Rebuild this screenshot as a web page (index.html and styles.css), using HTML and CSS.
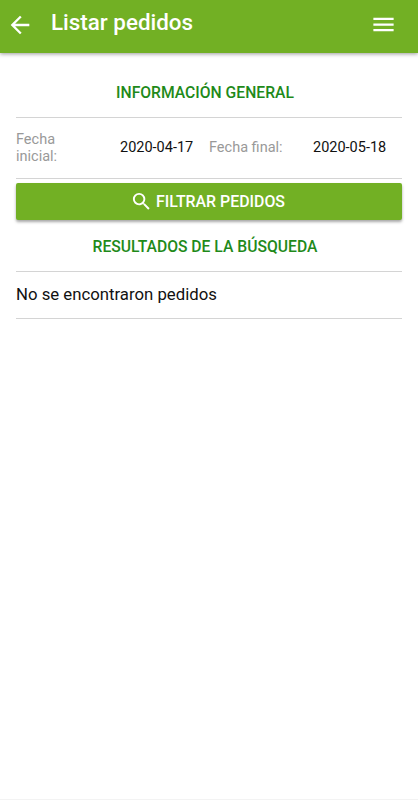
FILE: index.html
```html
<!DOCTYPE html>
<html lang="es">
<head>
  <meta charset="UTF-8" />
  <title>Listar pedidos</title>
  <meta name="viewport" content="width=device-width, initial-scale=1" />
  <link rel="stylesheet" href="styles.css">
</head>
<body>
  <header class="toolbar">
    <svg class="back" viewBox="0 0 24 24"><path d="M20 11H7.83l5.59-5.59L12 4l-8 8 8 8 1.41-1.41L7.83 13H20v-2z"/></svg>
    <h1>Listar pedidos</h1>
    <svg class="menu" viewBox="0 0 24 24"><path d="M3 18h18v-2H3v2zm0-5h18v-2H3v2zm0-7v2h18V6H3z"/></svg>
  </header>

  <main>
    <h2>Información general</h2>
    <div class="dates">
      <span class="label">Fecha inicial:</span>
      <span class="date">2020-04-17</span>
      <span class="label">Fecha final:</span>
      <span class="date">2020-05-18</span>
    </div>

    <button type="button">
      <svg viewBox="0 0 24 24"><path d="M15.5 14h-.79l-.28-.27A6.471 6.471 0 0 0 16 9.5 6.5 6.5 0 1 0 9.5 16c1.61 0 3.09-.59 4.23-1.57l.27.28v.79l5 4.99L20.49 19l-4.99-5zm-6 0C7.01 14 5 11.99 5 9.5S7.01 5 9.5 5 14 7.01 14 9.5 11.99 14 9.5 14z"/></svg>
      <span>Filtrar pedidos</span>
    </button>

    <h2>Resultados de la búsqueda</h2>
    <p class="empty">No se encontraron pedidos</p>
  </main>
</body>
</html>
```
FILE: styles.css
```css
* {
  box-sizing: border-box;
}

body {
  margin: 0;
  min-height: 800px;
  border-bottom: 1px solid #f3f3f3;
  background: #fff;
  color: #111;
  font-family: Roboto, sans-serif;
}

h1, h2, p {
  margin: 0;
}

.toolbar {
  display: flex;
  align-items: center;
  height: 53px;
  padding: 0 21px 4px 6px;
  background: #72b024;
  color: #fff;
  box-shadow: 0 1px 4px rgba(0, 0, 0, 0.4);
}

svg {
  fill: currentColor;
  flex: none;
}

.back {
  width: 28px;
  height: 28px;
}

.toolbar h1 {
  flex: 1;
  margin-left: 17px;
  padding-bottom: 5px;
  font-size: 22.4px;
  font-weight: 500;
  line-height: 28px;
}

.menu {
  width: 27px;
  height: 27px;
}

main {
  padding: 13px 16px 0;
}

h2 {
  height: 52px;
  padding-right: 8px;
  border-bottom: 1px solid #d4d4d4;
  color: #1f8a1a;
  font-size: 15.7px;
  font-weight: 500;
  line-height: 53px;
  text-align: center;
  text-transform: uppercase;
}

.dates {
  display: grid;
  grid-template-columns: 104px 89px 104px 1fr;
  align-items: center;
  height: 61px;
  padding-bottom: 1px;
  border-bottom: 1px solid #d4d4d4;
  font-size: 14.5px;
  line-height: 17px;
}

.label {
  padding-right: 24px;
  color: #999;
}

button {
  display: flex;
  align-items: center;
  justify-content: center;
  width: 100%;
  height: 37px;
  margin-top: 4px;
  padding: 0 3px 0 0;
  border: none;
  border-radius: 2px;
  background: #72b024;
  color: #fff;
  box-shadow: 0 2px 3px rgba(0, 0, 0, 0.35);
  font: 500 15.9px Roboto, sans-serif;
  text-transform: uppercase;
}

button svg {
  width: 23px;
  height: 23px;
  margin-right: 3px;
}

.empty {
  height: 47px;
  border-bottom: 1px solid #d4d4d4;
  font-size: 16.75px;
  line-height: 45px;
}
```
